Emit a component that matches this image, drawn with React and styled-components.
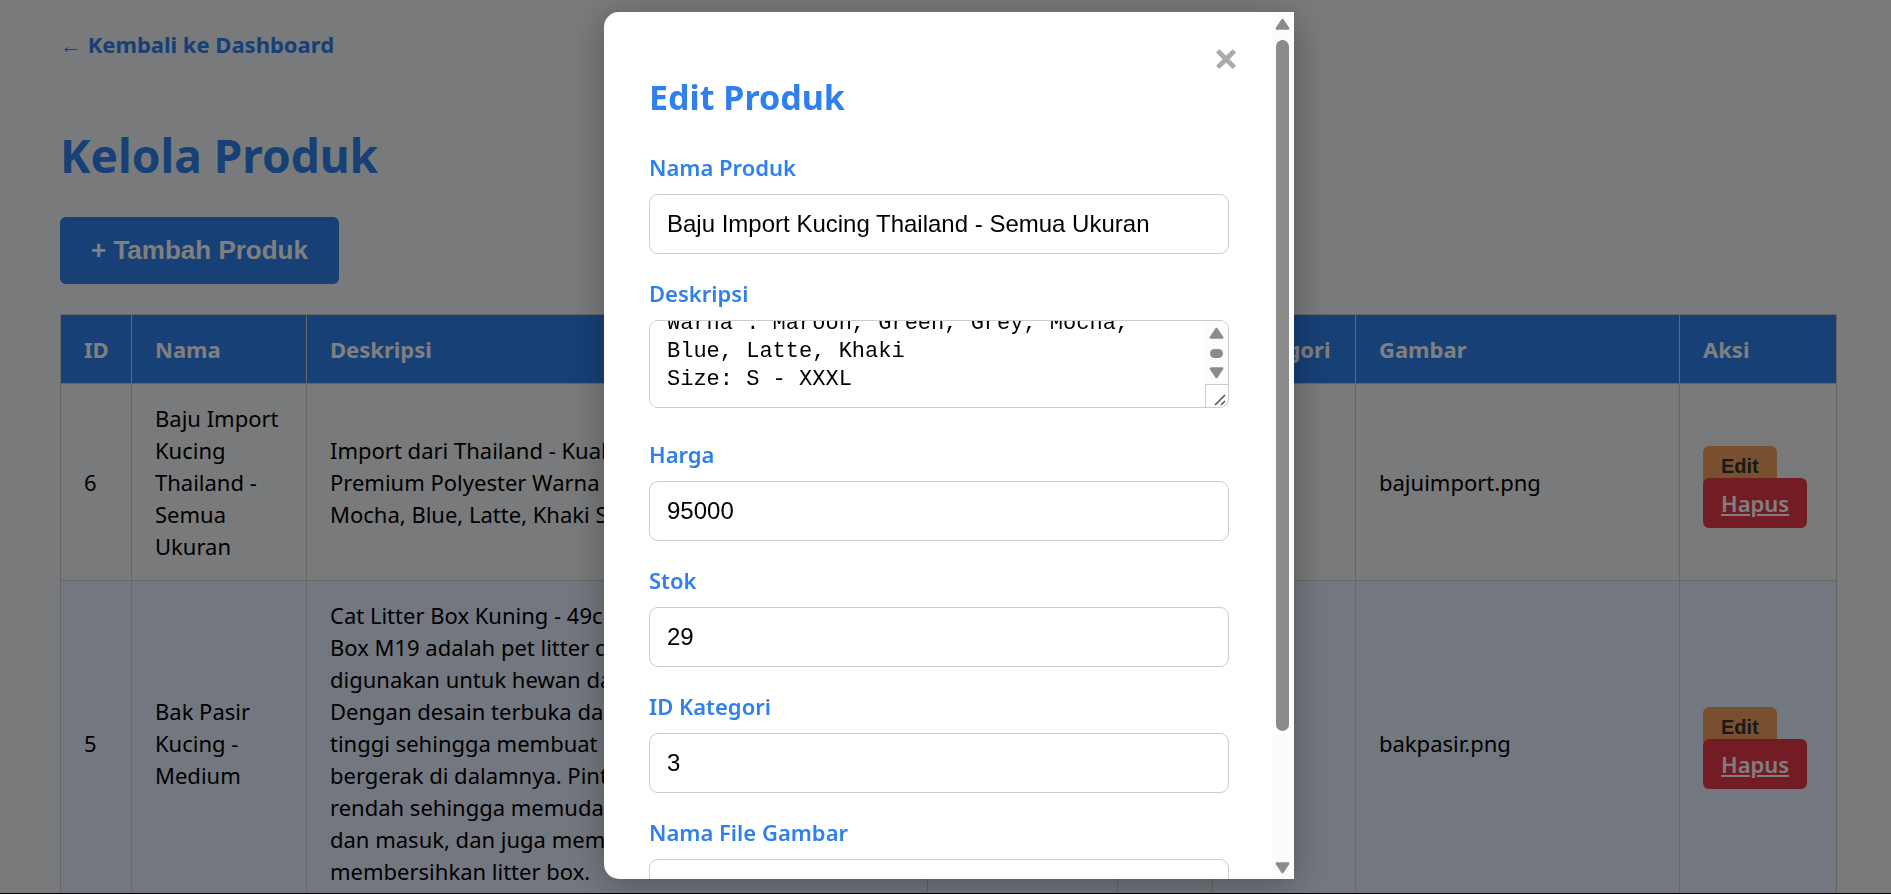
import React, { useLayoutEffect, useRef } from "react";
import styled, { createGlobalStyle } from "styled-components";

const sans = '"Noto Sans", "Open Sans", sans-serif';
const control = '"Liberation Sans", Arial, sans-serif';

const GlobalStyle = createGlobalStyle`
  * { box-sizing: border-box; }
  body {
    margin: 0;
    background: #f3f5f7;
    color: #000;
    font-family: ${sans};
    font-size: 22px;
    line-height: 32px;
    overflow: hidden;
  }
`;

const Page = styled.main`
  height: 100vh;
  overflow: hidden;
  padding: 28px 54px 0 60px;
`;

const BackLink = styled.a`
  display: block;
  color: #2f80ed;
  font-weight: 700;
  text-decoration: none;
`;

const Title = styled.h1`
  margin: 63px 0 30px;
  color: #2f80ed;
  font-size: 46px;
  line-height: 64px;
`;

const AddButton = styled.button`
  display: block;
  height: 67px;
  margin-bottom: 30px;
  padding: 0 31px;
  border: 0;
  border-radius: 6px;
  background: #2f80ed;
  color: #fff;
  font: 700 26px ${control};
`;

const Table = styled.table`
  width: 100%;
  table-layout: fixed;
  border-collapse: collapse;
`;

const Col = styled.col`
  width: ${(p) => p.$width};
`;

const HeadCell = styled.th`
  padding: 18px 20px 18px 23px;
  border: 1px solid #ccc;
  background: #2f80ed;
  color: #fff;
  text-align: left;
`;

const Row = styled.tr`
  background: ${(p) => (p.$striped ? "#e7effe" : "transparent")};
`;

const Cell = styled.td`
  padding: 18px 20px 18px 23px;
  border: 1px solid #ccc;
`;

const Line = styled.span`
  display: block;
  white-space: nowrap;
`;

const Actions = styled.div`
  display: flex;
  flex-direction: column;
  align-items: flex-start;
  padding-top: 10px;
`;

const EditButton = styled.button`
  height: 40px;
  margin-bottom: -8px;
  padding: 0 18px;
  border: 0;
  border-radius: 6px;
  background: #f2a15e;
  color: #333;
  font: 700 20px ${control};
`;

const DeleteLink = styled.a`
  padding: 9px 18px;
  border-radius: 6px;
  background: #e63946;
  color: #fff;
  font-weight: 600;
`;

const Overlay = styled.div`
  position: fixed;
  inset: 0;
  display: flex;
  justify-content: center;
  padding: 12px 0 14px 7px;
  border-bottom: 1px solid #000;
  background: rgba(0, 0, 0, 0.5);
`;

const Dialog = styled.section`
  display: flex;
  width: 690px;
  max-width: 100%;
  overflow: hidden;
  border-radius: 15px 0 0 15px;
  background: #fff;
  box-shadow: 0 6px 36px rgba(0, 0, 0, 0.3);
`;

const DialogBody = styled.div`
  flex: 1;
  min-width: 0;
  overflow: hidden;
  padding: 30px 42px 0 45px;
`;

const CloseRow = styled.div`
  display: flex;
  justify-content: flex-end;
  height: 31px;
  margin-right: -10px;
`;

const CloseButton = styled.button`
  padding: 0;
  border: 0;
  background: none;
  color: #aaa;
  font: 700 45px/32px ${sans};
`;

const DialogTitle = styled.h2`
  margin: 0 0 30px;
  color: #2f80ed;
  font-size: 34px;
  line-height: 48px;
`;

const Field = styled.div`
  margin-bottom: 23px;
`;

const Label = styled.label`
  display: block;
  margin-bottom: 11px;
  color: #2f80ed;
  font-weight: 600;
`;

const Input = styled.input`
  display: block;
  width: 100%;
  height: 60px;
  padding: 0 17px;
  border: 1px solid #ccc;
  border-radius: 9px;
  background: #fff;
  color: #000;
  font: 24px ${control};
`;

const TextBox = styled.div`
  display: flex;
  height: 88px;
  margin-bottom: 30px;
  overflow: hidden;
  border: 1px solid #ccc;
  border-radius: 9px;
`;

const TextArea = styled.textarea`
  flex: 1;
  min-width: 0;
  padding: 15px 17px 13px;
  border: 0;
  outline: 0;
  resize: none;
  overflow: hidden;
  background: #fff;
  color: #000;
  font: 22px/28px "Liberation Mono", monospace;
`;

const ScrollTrack = styled.div`
  display: flex;
  flex: ${(p) => (p.$fill ? "1" : "none")};
  flex-direction: column;
  align-items: center;
  justify-content: space-between;
  width: 23px;
  padding: ${(p) => p.$pad};
  background: #fcfcfc;
`;

const ScrollThumb = styled.div`
  flex: none;
  width: 13px;
  height: ${(p) => p.$size};
  margin-bottom: ${(p) => p.$rest};
  border-radius: 7px;
  background: #8b8b8b;
`;

const TextBoxSide = styled.div`
  display: flex;
  flex: none;
  flex-direction: column;
`;

const Grip = styled.div`
  display: flex;
  align-items: flex-end;
  justify-content: flex-end;
  height: 23px;
  padding: 0 2px 1px 0;
  border-top: 1px solid #ccc;
  border-left: 1px solid #ccc;
`;

function Arrow({ down }) {
  return (
    <svg width="15" height="12" viewBox="0 0 15 12" aria-hidden="true">
      <path
        d={down ? "M1.8 1.5h11.4L7.5 10z" : "M1.8 10.5h11.4L7.5 2z"}
        fill="#8b8b8b"
        stroke="#8b8b8b"
        strokeWidth="2.4"
        strokeLinejoin="round"
      />
    </svg>
  );
}

const columns = [
  ["ID", "71px"],
  ["Nama", "175px"],
  ["Deskripsi", "621px"],
  ["Harga", "190px"],
  ["Stok", "95px"],
  ["Kategori", "143px"],
  ["Gambar", "324px"],
  ["Aksi", "auto"],
];

const products = [
  {
    id: 6,
    name: ["Baju Import", "Kucing", "Thailand -", "Semua", "Ukuran"],
    text: [
      "Import dari Thailand - Kualitas",
      "Premium Polyester Warna : Maroon,",
      "Mocha, Blue, Latte, Khaki Size: S - XXXL",
    ],
    price: "95000",
    stock: 29,
    category: 3,
    image: "bajuimport.png",
  },
  {
    id: 5,
    name: ["Bak Pasir", "Kucing -", "Medium"],
    text: [
      "Cat Litter Box Kuning - 49cm",
      "Box M19 adalah pet litter dapat",
      "digunakan untuk hewan dan",
      "Dengan desain terbuka dan",
      "tinggi sehingga membuat",
      "bergerak di dalamnya. Pintu",
      "rendah sehingga memudahkan",
      "dan masuk, dan juga membantu",
      "membersihkan litter box.",
    ],
    price: "75000",
    stock: 12,
    category: 2,
    image: "bakpasir.png",
  },
];

const description =
  "Import dari Thailand - Kualitas\nPremium Polyester\nWarna : Maroon, Green, Grey, Mocha, Blue, Latte, Khaki\nSize: S - XXXL";

function TextField({ id, label, value }) {
  return (
    <Field>
      <Label htmlFor={id}>{label}</Label>
      <Input id={id} defaultValue={value} />
    </Field>
  );
}

function DescriptionField() {
  const area = useRef(null);
  useLayoutEffect(() => {
    area.current.scrollTop = area.current.scrollHeight;
  }, []);
  return (
    <Field>
      <Label htmlFor="description">Deskripsi</Label>
      <TextBox>
        <TextArea id="description" ref={area} defaultValue={description} />
        <TextBoxSide>
          <ScrollTrack $fill $pad="6px 0 5px">
            <Arrow />
            <ScrollThumb $size="9px" $rest="0" />
            <Arrow down />
          </ScrollTrack>
          <Grip>
            <svg width="12" height="12" viewBox="0 0 12 12" aria-hidden="true">
              <path d="M1 11L11 1M7 11l4-4" stroke="#555" strokeWidth="1.6" />
            </svg>
          </Grip>
        </TextBoxSide>
      </TextBox>
    </Field>
  );
}

export default function App() {
  return (
    <>
      <GlobalStyle />
      <Page>
        <BackLink href="#dashboard">← Kembali ke Dashboard</BackLink>
        <Title>Kelola Produk</Title>
        <AddButton type="button">+ Tambah Produk</AddButton>
        <Table>
          <colgroup>
            {columns.map(([name, width]) => (
              <Col key={name} $width={width} />
            ))}
          </colgroup>
          <thead>
            <tr>
              {columns.map(([name]) => (
                <HeadCell key={name} scope="col">{name}</HeadCell>
              ))}
            </tr>
          </thead>
          <tbody>
            {products.map((p, i) => (
              <Row key={p.id} $striped={i % 2 === 1}>
                <Cell>{p.id}</Cell>
                <Cell>{p.name.map((l) => <Line key={l}>{l}</Line>)}</Cell>
                <Cell>{p.text.map((l) => <Line key={l}>{l}</Line>)}</Cell>
                <Cell>{p.price}</Cell>
                <Cell>{p.stock}</Cell>
                <Cell>{p.category}</Cell>
                <Cell>{p.image}</Cell>
                <Cell>
                  <Actions>
                    <EditButton type="button">Edit</EditButton>
                    <DeleteLink href="#hapus">Hapus</DeleteLink>
                  </Actions>
                </Cell>
              </Row>
            ))}
          </tbody>
        </Table>
      </Page>
      <Overlay>
        <Dialog role="dialog" aria-labelledby="dialog-title">
          <DialogBody>
            <CloseRow>
              <CloseButton type="button" aria-label="Tutup">×</CloseButton>
            </CloseRow>
            <DialogTitle id="dialog-title">Edit Produk</DialogTitle>
            <TextField id="name" label="Nama Produk" value="Baju Import Kucing Thailand - Semua Ukuran" />
            <DescriptionField />
            <TextField id="price" label="Harga" value="95000" />
            <TextField id="stock" label="Stok" value="29" />
            <TextField id="category" label="ID Kategori" value="3" />
            <TextField id="image" label="Nama File Gambar" value="bajuimport.png" />
          </DialogBody>
          <ScrollTrack $pad="6px 0 5px">
            <Arrow />
            <ScrollThumb $size="691px" $rest="121px" />
            <Arrow down />
          </ScrollTrack>
        </Dialog>
      </Overlay>
    </>
  );
}
